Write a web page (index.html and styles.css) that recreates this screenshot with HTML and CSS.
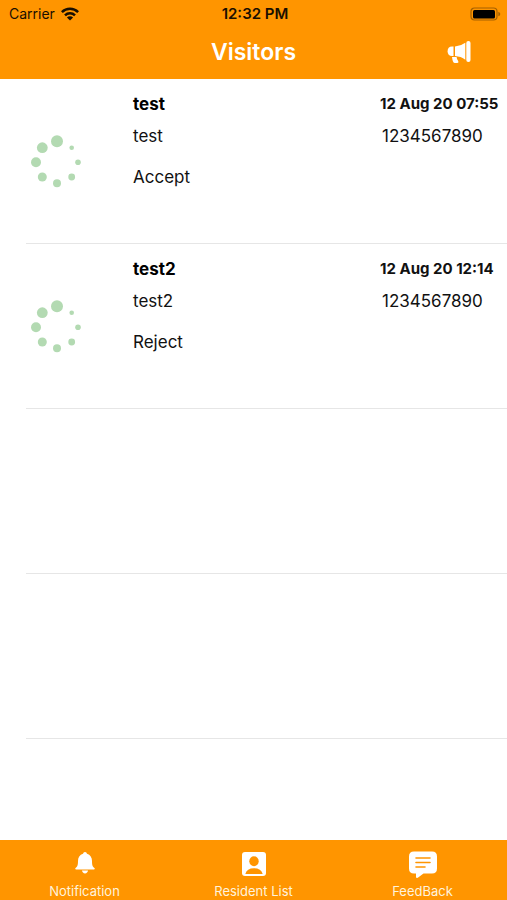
FILE: index.html
```html
<!DOCTYPE html>
<html lang="en">
<head>
<meta charset="utf-8">
<meta name="viewport" content="width=device-width, initial-scale=1">
<title>Visitors</title>
<link rel="stylesheet" href="styles.css">
</head>
<body>
<svg class="defs" aria-hidden="true">
  <symbol id="spinner" viewBox="0 0 56 56">
    <circle cx="28" cy="7.3" r="6"/>
    <circle cx="13.3" cy="13.7" r="5.4"/>
    <circle cx="7" cy="28.3" r="5"/>
    <circle cx="13.3" cy="43" r="4.5"/>
    <circle cx="28" cy="49.3" r="4"/>
    <circle cx="42.7" cy="43" r="3.4"/>
    <circle cx="49" cy="28.3" r="2.8"/>
    <circle cx="42.7" cy="13.7" r="2.3"/>
  </symbol>
</svg>
<header class="header">
  <div class="status">
    <div class="carrier">
      <span>Carrier</span>
      <svg width="18" height="14" viewBox="0 0 18 14" aria-hidden="true">
        <g fill="none" stroke="#1a0f00" stroke-width="2.5">
          <path d="M.9 5.1a11.5 11.5 0 0 1 16.2 0"/>
          <path d="M4 8.4a7.1 7.1 0 0 1 10 0"/>
        </g>
        <path fill="#1a0f00" d="M9 13.6 5.9 10.5a4.4 4.4 0 0 1 6.2 0z"/>
      </svg>
    </div>
    <time class="clock">12:32 PM</time>
    <svg class="battery" width="31" height="14" viewBox="0 0 31 14" aria-hidden="true">
      <rect x="1" y="1" width="26" height="12" rx="3.5" fill="none" stroke="#a56100" stroke-width="1.2"/>
      <rect x="3" y="3" width="22" height="8.500" rx="1.500" fill="#000"/>
      <path d="M28.300 4.700v4.600q2-.7 2-2.300t-2-2.300z" fill="#a56100"/>
    </svg>
  </div>
  <div class="navbar">
    <h1 class="title">Visitors</h1>
    <button class="announce" type="button" aria-label="Announcements">
      <svg width="24" height="24" viewBox="0 0 24 24" fill="#fff" aria-hidden="true">
        <path d="M6.500 6.500v9.500H5Q.6 16 .6 11.300T5 6.500z"/>
        <path d="M8 6.500q6-.4 10.300-3.700v16.900Q14 16.400 8 16z"/>
        <rect x="19.300" y="1" width="4.200" height="21" rx="2"/>
        <path d="M5 17h4.600q.2 2.500 1.700 4.300.7 1.700-1 1.700H8q-1.400 0-2-1.500T5 17z"/>
      </svg>
    </button>
  </div>
</header>
<main class="list">
  <article class="row">
    <svg class="spinner" role="img" aria-label="Loading photo"><use href="#spinner"/></svg>
    <div class="details">
      <h2 class="name">test</h2>
      <p>test</p>
      <p class="answer">Accept</p>
    </div>
    <div class="meta">
      <time class="date">12 Aug 20 07:55</time>
      <p class="phone">1234567890</p>
    </div>
  </article>
  <article class="row">
    <svg class="spinner" role="img" aria-label="Loading photo"><use href="#spinner"/></svg>
    <div class="details">
      <h2 class="name">test2</h2>
      <p>test2</p>
      <p class="answer">Reject</p>
    </div>
    <div class="meta">
      <time class="date">12 Aug 20 12:14</time>
      <p class="phone">1234567890</p>
    </div>
  </article>
  <div class="row"></div>
  <div class="row"></div>
</main>
<nav class="tabs">
  <a class="tab" href="#notification">
    <svg width="28" height="28" viewBox="0 0 28 28" fill="#fff" aria-hidden="true">
      <path d="M14 2q1.700 0 2 1.700c3.300 1 5 3.800 5 7.300 0 4.700.8 5.800 2.400 7 .7.600.4 1.500-.5 1.500H5.100c-.9 0-1.200-.9-.5-1.500C6.200 16.800 7 15.700 7 11c0-3.500 1.700-6.300 5-7.300Q12.300 2 14 2z"/>
      <path d="M11 20.600h6q-.5 2.800-3 2.800t-3-2.800z"/>
    </svg>
    <span>Notification</span>
  </a>
  <a class="tab" href="#residents">
    <svg width="28" height="28" viewBox="0 0 28 28" aria-hidden="true">
      <rect x="2" y="2" width="24" height="24" rx="3" fill="#fff"/>
      <ellipse cx="14" cy="11.300" rx="4.700" ry="5" fill="#ff9500"/>
      <path d="M5.300 24q1.500-5.800 8.700-5.800t8.700 5.800z" fill="#ff9500"/>
    </svg>
    <span>Resident List</span>
  </a>
  <a class="tab" href="#feedback">
    <svg width="30" height="28" viewBox="0 0 30 28" aria-hidden="true">
      <path d="M6 1.500h18q5 0 5 5v12q0 5-5 5h-8.500l-5.700 4.300q-1.800.6-1.800-1.100v-3.200H6q-5 0-5-5v-12q0-5 5-5z" fill="#fff"/>
      <path d="M8 8h14M8 12.500h14M8 17h9" fill="none" stroke="#ff9500" stroke-width="1.600" stroke-linecap="round"/>
    </svg>
    <span>FeedBack</span>
  </a>
</nav>
</body>
</html>
```
FILE: styles.css
```css
* { box-sizing: border-box; }

body {
  margin: 0;
  min-height: 100vh;
  display: flex;
  flex-direction: column;
  background: #fff;
  color: #111;
  font-family: Inter, "Liberation Sans", sans-serif;
  font-size: 17px;
  line-height: 20px;
}

h1, h2, p { margin: 0; }

.defs { display: none; }

.header { background: #ff9500; padding-bottom: 9px; }

.status {
  display: grid;
  grid-template-columns: 1fr auto 1fr;
  align-items: center;
  padding: 4px 6px 3px 9px;
  font-size: 14px;
  color: #1a0f00;
}

.carrier { display: flex; align-items: center; gap: 6px; }
.clock { font-size: 15px; font-weight: 600; }
.battery { justify-self: end; }

.navbar {
  display: grid;
  grid-template-columns: 1fr auto 1fr;
  align-items: center;
  padding: 9px 36px 2px;
}

.title {
  grid-column: 2;
  font-size: 23px;
  font-weight: 600;
  line-height: 32px;
  color: #fff;
}

.announce {
  justify-self: end;
  display: flex;
  padding: 0;
  border: 0;
  background: none;
}

.list { flex: 1; }

.row {
  display: grid;
  grid-template-columns: 107px 1fr 127px;
  min-height: 165px;
  margin-left: 26px;
  padding-top: 15px;
  border-bottom: 1px solid #e6e6e6;
}

.spinner {
  width: 56px;
  height: 56px;
  margin: 40px 0 0 3px;
  fill: #b3dab2;
}

.details, .meta {
  display: flex;
  flex-direction: column;
  gap: 12px;
}

.name { font-size: 17px; font-weight: 700; color: #000; }
.answer { margin-top: 9px; }
.date { font-size: 15px; font-weight: 700; white-space: nowrap; }
.phone { padding-left: 2px; }

.tabs {
  display: grid;
  grid-template-columns: repeat(3, 1fr);
  padding-top: 10px;
  background: #ff9500;
}

.tab {
  display: flex;
  flex-direction: column;
  align-items: center;
  gap: 5px;
  padding-bottom: 1px;
  color: #fff3dc;
  font-size: 13px;
  line-height: 16px;
  text-decoration: none;
}
```
